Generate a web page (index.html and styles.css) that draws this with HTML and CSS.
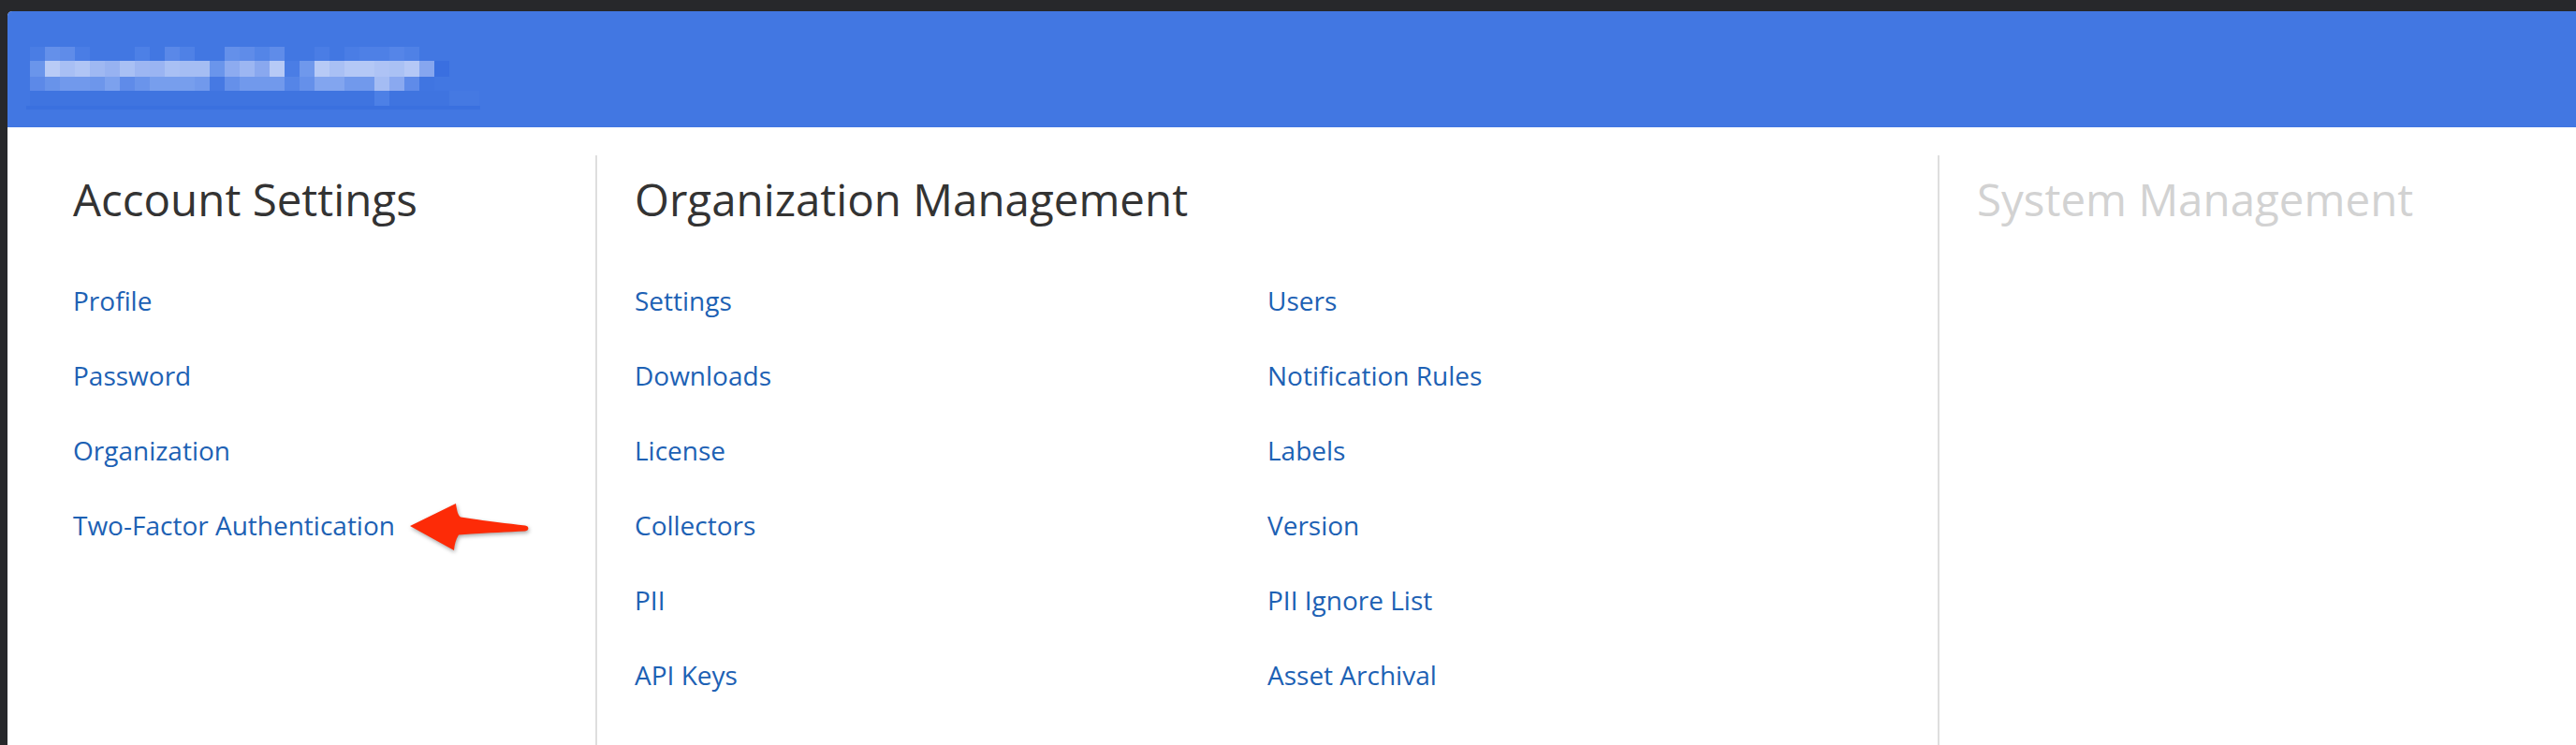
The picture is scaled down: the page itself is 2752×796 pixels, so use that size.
FILE: index.html
```html
<!DOCTYPE html>
<html>
<head>
<meta charset="UTF-8" />
<title>Settings</title>
<link rel="stylesheet" href="styles.css">
</head>
<body>
<div class="window">
	<div class="topbar">
		<svg class="brand" width="490" height="70" viewBox="28 50 490 70" aria-label="Company name (blurred)">
			<!-- row 1 -->
			<rect x="32" y="50" width="16" height="15" fill="#4a7de4"/>
			<rect x="48" y="50" width="16" height="15" fill="#6490ea"/>
			<rect x="64" y="50" width="16" height="15" fill="#5f8ce9"/>
			<rect x="80" y="50" width="16" height="15" fill="#4a7de5"/>
			<rect x="144" y="50" width="16" height="15" fill="#4d80e6"/>
			<rect x="176" y="50" width="16" height="15" fill="#5a88e8"/>
			<rect x="192" y="50" width="16" height="15" fill="#4f81e6"/>
			<rect x="240" y="50" width="16" height="15" fill="#6490ea"/>
			<rect x="256" y="50" width="16" height="15" fill="#5f8ce9"/>
			<rect x="272" y="50" width="16" height="15" fill="#5485e7"/>
			<rect x="288" y="50" width="16" height="15" fill="#5f8ce9"/>
			<rect x="336" y="50" width="16" height="15" fill="#4a7de5"/>
			<rect x="368" y="50" width="16" height="15" fill="#4a7de5"/>
			<rect x="384" y="50" width="32" height="15" fill="#4e80e6"/>
			<rect x="416" y="50" width="16" height="15" fill="#5585e8"/>
			<rect x="432" y="50" width="16" height="15" fill="#4f81e6"/>
			<!-- row 2 -->
			<rect x="32" y="65" width="16" height="17" fill="#6a95eb"/>
			<rect x="48" y="65" width="16" height="17" fill="#b9cbf6"/>
			<rect x="64" y="65" width="16" height="17" fill="#a8bff4"/>
			<rect x="80" y="65" width="16" height="17" fill="#b0c5f5"/>
			<rect x="96" y="65" width="16" height="17" fill="#9fb8f2"/>
			<rect x="112" y="65" width="16" height="17" fill="#97b2f1"/>
			<rect x="128" y="65" width="16" height="17" fill="#a9c0f4"/>
			<rect x="144" y="65" width="16" height="17" fill="#9db6f2"/>
			<rect x="160" y="65" width="16" height="17" fill="#9ab4f2"/>
			<rect x="176" y="65" width="16" height="17" fill="#a9c0f4"/>
			<rect x="192" y="65" width="32" height="17" fill="#a5bdf3"/>
			<rect x="224" y="65" width="16" height="17" fill="#6a95eb"/>
			<rect x="240" y="65" width="16" height="17" fill="#8dabf0"/>
			<rect x="256" y="65" width="16" height="17" fill="#9cb6f2"/>
			<rect x="272" y="65" width="16" height="17" fill="#89a8ef"/>
			<rect x="288" y="65" width="16" height="17" fill="#b7caf6"/>
			<rect x="304" y="65" width="16" height="17" fill="#4a7de5"/>
			<rect x="320" y="65" width="16" height="17" fill="#6f98ec"/>
			<rect x="336" y="65" width="16" height="17" fill="#b7caf6"/>
			<rect x="352" y="65" width="16" height="17" fill="#a9c0f4"/>
			<rect x="368" y="65" width="32" height="17" fill="#b4c8f6"/>
			<rect x="400" y="65" width="16" height="17" fill="#aec3f5"/>
			<rect x="416" y="65" width="16" height="17" fill="#aac1f4"/>
			<rect x="432" y="65" width="16" height="17" fill="#b5c8f6"/>
			<rect x="448" y="65" width="16" height="17" fill="#86a6ef"/>
			<rect x="464" y="65" width="16" height="17" fill="#3a6fe0"/>
			<!-- row 3 -->
			<rect x="32" y="82" width="16" height="15" fill="#5c89e8"/>
			<rect x="48" y="82" width="16" height="15" fill="#6893ea"/>
			<rect x="64" y="82" width="32" height="15" fill="#7199ec"/>
			<rect x="96" y="82" width="16" height="15" fill="#6d96eb"/>
			<rect x="112" y="82" width="16" height="15" fill="#7ca1ee"/>
			<rect x="128" y="82" width="16" height="15" fill="#5f8be9"/>
			<rect x="144" y="82" width="16" height="15" fill="#6a94eb"/>
			<rect x="160" y="82" width="48" height="15" fill="#779eed"/>
			<rect x="208" y="82" width="16" height="15" fill="#7199ec"/>
			<rect x="224" y="82" width="16" height="15" fill="#4679e3"/>
			<rect x="240" y="82" width="16" height="15" fill="#6590ea"/>
			<rect x="256" y="82" width="48" height="15" fill="#7199ec"/>
			<rect x="304" y="82" width="16" height="15" fill="#5585e7"/>
			<rect x="320" y="82" width="16" height="15" fill="#6590ea"/>
			<rect x="336" y="82" width="32" height="15" fill="#82a5ef"/>
			<rect x="368" y="82" width="32" height="15" fill="#7199ec"/>
			<rect x="400" y="82" width="16" height="15" fill="#a4bcf3"/>
			<rect x="416" y="82" width="16" height="15" fill="#8aa9f0"/>
			<rect x="432" y="82" width="16" height="15" fill="#5f8be9"/>
			<rect x="448" y="82" width="16" height="15" fill="#4075e1"/>
			<!-- row 4 -->
			<rect x="32" y="97" width="480" height="16" fill="#3f74e0"/>
			<rect x="400" y="97" width="16" height="16" fill="#4d80e6"/>
			<rect x="480" y="97" width="32" height="16" fill="#4579e2"/>
			<rect x="28" y="113" width="485" height="4" fill="#3a70df"/>
		</svg>
	</div>

	<div class="panels">
		<div class="panel first">
			<h2 class="panel-title">Account Settings</h2>
			<ul class="links">
				<li><a href="#">Profile</a></li>
				<li><a href="#">Password</a></li>
				<li><a href="#">Organization</a></li>
				<li><a href="#">Two-Factor Authentication</a></li>
			</ul>
			<svg class="pointer" width="145" height="68" viewBox="0 0 145 68">
				<path d="M8 33 L57 9 C58 16 59 21 62 23.5 C85 27 110 30 131 32.5 C135.5 33 135.5 38 131 38.5 C110 39.5 85 40.5 60 42.5 C57 47 55.5 53 55 59 Z" fill="#fd2b07"/>
			</svg>
		</div>

		<div class="panel">
			<h2 class="panel-title">Organization Management</h2>
			<ul class="links two-cols">
				<li><a href="#">Settings</a></li>
				<li><a href="#">Users</a></li>
				<li><a href="#">Downloads</a></li>
				<li><a href="#">Notification Rules</a></li>
				<li><a href="#">License</a></li>
				<li><a href="#">Labels</a></li>
				<li><a href="#">Collectors</a></li>
				<li><a href="#">Version</a></li>
				<li><a href="#">PII</a></li>
				<li><a href="#">PII Ignore List</a></li>
				<li><a href="#">API Keys</a></li>
				<li><a href="#">Asset Archival</a></li>
			</ul>
		</div>

		<div class="panel">
			<h2 class="panel-title disabled">System Management</h2>
		</div>
	</div>
</div>
</body>
</html>
```

FILE: styles.css
```css
html, body {
	margin: 0;
	padding: 0;
}

body {
	background-color: #27282b;
	font-family: "Open Sans", "Liberation Sans", sans-serif;
	overflow: hidden;
}

.window {
	margin-top: 12px;
	margin-left: 8px;
	min-height: 784px;
	background-color: white;
	border-top-left-radius: 5px;
	overflow: hidden;
}

.topbar {
	height: 124px;
	background-color: #4277e2;
	padding-left: 20px;
	padding-top: 38px;
	box-sizing: border-box;
}

.brand {
	display: block;
}

.panels {
	display: grid;
	grid-template-columns: 628px 1434px 1fr;
	padding-top: 30px;
}

.panel {
	position: relative;
	min-height: 640px;
	border-left: 2px solid #dedede;
	padding-left: 40px;
	padding-right: 40px;
}

.panel.first {
	border-left: none;
	padding-left: 70px;
}

.panel-title {
	margin: 18px 0 0 0;
	font-size: 47.5px;
	line-height: 58px;
	font-weight: 400;
	color: #333333;
}

.panel-title.disabled {
	color: #d2d2d2;
}

.links {
	list-style: none;
	margin: 39px 0 0 0;
	padding: 0;
}

.links li {
	font-size: 28px;
	line-height: 80px;
}

.links a {
	color: #1d61b4;
	text-decoration: none;
}

.two-cols {
	display: grid;
	grid-template-columns: 676px 1fr;
}

.pointer {
	position: absolute;
	left: 422px;
	top: 363px;
	filter: drop-shadow(1px 2px 2px rgba(0, 0, 0, 0.35));
}
```
